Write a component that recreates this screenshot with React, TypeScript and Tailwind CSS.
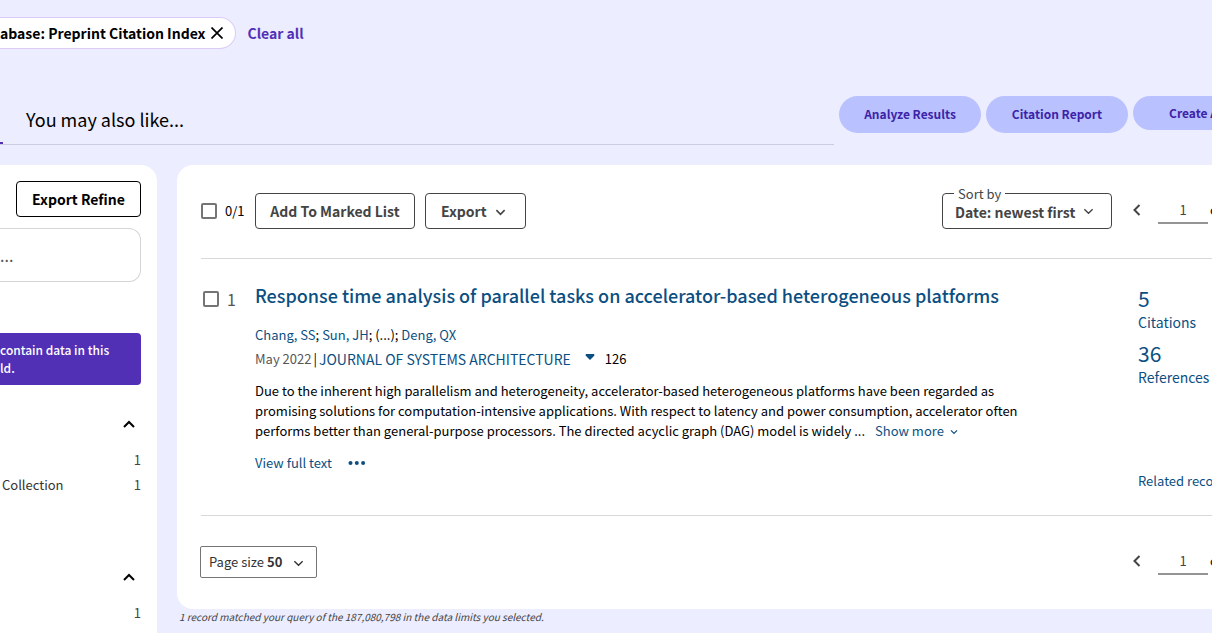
import React from "react";

type IconProps = { className?: string; d: string; width?: number };

function Stroke({ className, d, width = 2 }: IconProps) {
  return (
    <svg viewBox="0 0 12 12" className={className} fill="none" stroke="currentColor" strokeWidth={width} aria-hidden="true">
      <path d={d} />
    </svg>
  );
}

const DOWN = "M1.5 3.5 L6 8 L10.5 3.5";
const UP = "M1 9 L6 4 L11 9";
const LEFT = "M8.5 1 L3.5 6 L8.5 11";
const CLOSE = "M0.5 0.5 L11.5 11.5 M11.5 0.5 L0.5 11.5";

function Check({ label }: { label: string }) {
  return (
    <input
      type="checkbox"
      aria-label={label}
      className="size-4 shrink-0 appearance-none rounded-xs border-2 border-[#757575] bg-white checked:bg-[#5230b6]"
    />
  );
}

function Pager({ label }: { label: string }) {
  return (
    <div className="flex h-7 w-20 shrink-0 items-center text-[13px] text-[#444]">
      <button type="button" aria-label="Previous page" className="mr-4 w-[10px] shrink-0">
        <Stroke d={LEFT} className="-ml-px size-3" />
      </button>
      <input
        aria-label={label}
        defaultValue="1"
        className="h-7 w-[50px] shrink-0 border-b-2 border-[#949494] bg-transparent text-center outline-none"
      />
      <span className="ml-0.5 whitespace-nowrap text-black">of 1</span>
    </div>
  );
}

function Facet({ rows }: { rows: [string, string][] }) {
  return (
    <section>
      <div className="flex h-6 items-center justify-end pr-1.5">
        <button type="button" aria-label="Collapse section" className="text-black">
          <Stroke d={UP} className="size-3" />
        </button>
      </div>
      <ul className="pt-[11px] text-[13px] leading-[25px] text-[#444]">
        {rows.map(([name, count], i) => (
          <li key={i} className="flex justify-between pl-0.5">
            <span className="text-[#333]">{name}</span>
            <span>{count}</span>
          </li>
        ))}
      </ul>
    </section>
  );
}

const pill = "h-[37px] w-[142px] shrink-0 whitespace-nowrap rounded-full bg-[#bac1ff] pb-0.5 text-[12px] font-bold text-[#3d23a8]";
const link = "text-[#0b4f82] hover:underline";

export default function App() {
  return (
    <div className="flex min-h-screen flex-col overflow-hidden bg-[#ecedff] font-['Noto_Sans_CJK_SC',sans-serif] text-[13px] text-black">
      <header className="flex items-center gap-[11px] pt-[17px] text-[14px] font-bold">
        <div className="flex h-8 items-center gap-1.5 rounded-r-full border border-l-0 border-[#dccbf8] bg-white pr-3">
          <span className="whitespace-nowrap">abase: Preprint Citation Index</span>
          <button type="button" aria-label="Remove filter">
            <Stroke d={CLOSE} width={1.7} className="size-3" />
          </button>
        </div>
        <a href="#clear" className="text-[#5230b6]">Clear all</a>
      </header>

      <div className="mt-[47px] flex h-[49px] gap-[5px]">
        <nav className="flex flex-1 items-stretch border-b border-[#cbcbe2]">
          <span className="w-[3px] border-b-2 border-[#5230b6]" />
          <a href="#like" className="pl-[23px] text-[18px] leading-[46px]">You may also like...</a>
        </nav>
        <div className="flex w-[373px] shrink-0 gap-[5px] overflow-hidden">
          <button type="button" className={pill}>Analyze Results</button>
          <button type="button" className={pill}>Citation Report</button>
          <button type="button" className="h-[34px] w-[142px] shrink-0 whitespace-nowrap rounded-full bg-[#bac1ff] text-[12px] font-bold text-[#3d23a8]">Create Alert</button>
        </div>
      </div>

      <div className="flex flex-1 gap-5 pt-5">
        <aside className="w-[157px] shrink-0 rounded-tr-2xl bg-white pr-4 pt-4">
          <div className="flex justify-end">
            <button type="button" className="h-9 w-[125px] rounded border border-black text-[14px] font-bold">Export Refine</button>
          </div>
          <input
            aria-label="Search within results"
            placeholder="..."
            className="mt-[11px] h-[54px] w-full rounded-r-xl border border-l-0 border-[#d5d5d5] text-[16px] outline-none placeholder:text-[#555]"
          />
          <p className="mt-[51px] h-[52px] rounded-r bg-[#5230b6] pt-2 text-[12px] font-medium leading-[18px] text-white">
            contain data in this
            <br />
            ld.
          </p>
          <div className="mt-[27px] flex flex-col gap-[68px]">
            <Facet rows={[["", "1"], ["Collection", "1"]]} />
            <Facet rows={[["", "1"]]} />
          </div>
        </aside>

        <div className="min-w-0 flex-1">
          <main className="overflow-hidden rounded-l-2xl bg-white pl-6">
            <div className="flex h-[94px] items-start border-b border-[#d9d9d9] pt-7">
              <label className="flex h-9 w-[54px] shrink-0 items-center gap-2">
                <Check label="Select all records" />
                <span>0/1</span>
              </label>
              <button type="button" className="h-9 w-40 shrink-0 rounded border border-[#444] text-[14px] font-bold text-[#444]">Add To Marked List</button>
              <button type="button" className="ml-[10px] flex h-9 w-[101px] shrink-0 items-center gap-2 rounded border border-[#444] pl-[15px] text-[14px] font-bold text-[#444]">
                Export
                <Stroke d={DOWN} width={1.8} className="mt-0.5 size-[11px]" />
              </button>
              <div className="relative ml-auto h-9 w-[170px] shrink-0">
                <select
                  id="sort"
                  className="h-9 w-full appearance-none rounded border border-[#444] bg-white pl-3 pt-0.5 text-[14px] font-bold text-[#444] outline-none"
                >
                  <option>Date: newest first</option>
                </select>
                <label htmlFor="sort" className="absolute -top-2 left-3 bg-white px-1 text-[13px] leading-[18px] text-[#444]">Sort by</label>
                <Stroke d={DOWN} width={1.5} className="pointer-events-none absolute right-[18px] top-[13px] size-[11px] text-[#444]" />
              </div>
              <div className="ml-5 mt-[3px]"><Pager label="Page number" /></div>
            </div>

            <article className="flex h-[257px] border-b border-[#d9d9d9]">
              <label className="mt-8 flex h-4 w-[54px] shrink-0 items-center gap-2 pl-0.5">
                <Check label="Select record 1" />
                <span className="text-[16px] text-[#555]">1</span>
              </label>
              <div className="min-w-0 flex-1 pt-[22px]">
                <h2 className="text-[18px] font-medium leading-7">
                  <a href="#record" className={link}>Response time analysis of parallel tasks on accelerator-based heterogeneous platforms</a>
                </h2>
                <p className="mt-4 leading-5">
                  <a href="#a1" className={link}>Chang, SS</a>; <a href="#a2" className={link}>Sun, JH</a>; (...); <a href="#a3" className={link}>Deng, QX</a>
                </p>
                <div className="mt-0.5 flex items-center leading-6">
                  <span className="text-[#555]">May 2022</span>
                  <span className="mx-0.5">|</span>
                  <a href="#journal" className="text-[14px] text-[#0b4f82] hover:underline">JOURNAL OF SYSTEMS ARCHITECTURE</a>
                  <svg viewBox="0 0 10 6" className="mb-1 ml-3.5 h-1.5 w-[10px] text-[#0b4f82]" fill="currentColor" aria-hidden="true">
                    <path d="M1 0H9Q10 1 9 2L5 6L1 2Q0 1 1 0Z" />
                  </svg>
                  <span className="ml-[10px]">126</span>
                </div>
                <div className="mt-[10px] max-w-[775px] leading-5">
                  <p className="inline">
                    Due to the inherent high parallelism and heterogeneity, accelerator-based heterogeneous platforms have been regarded as promising solutions for computation-intensive applications. With respect to latency and power consumption, accelerator often performs better than general-purpose processors. The directed acyclic graph (DAG) model is widely ...
                  </p>
                  <button type="button" className="ml-[10px] inline whitespace-nowrap text-[#0b4f82]">
                    Show more
                    <Stroke d={DOWN} width={1.8} className="ml-1.5 inline size-2" />
                  </button>
                </div>
                <div className="mt-3 flex items-center gap-4 leading-5">
                  <a href="#full" className={link}>View full text</a>
                  <button type="button" aria-label="More actions" className="text-[#0b4f82]">
                    <svg viewBox="0 0 18 4" className="h-1 w-[18px]" fill="currentColor" aria-hidden="true">
                      <circle cx="2.5" cy="2" r="2" />
                      <circle cx="8.8" cy="2" r="2" />
                      <circle cx="15.1" cy="2" r="2" />
                    </svg>
                  </button>
                </div>
              </div>
              <div className="flex w-[74px] shrink-0 flex-col whitespace-nowrap pt-[27px]">
                <a href="#citations" className="text-[21px] leading-6 text-[#0b4f82]">5</a>
                <a href="#citations" className="text-[14px] leading-6 text-[#0b4f82]">Citations</a>
                <a href="#references" className="mt-[7px] text-[21px] leading-6 text-[#0b4f82]">36</a>
                <a href="#references" className="text-[14px] leading-6 text-[#0b4f82]">References</a>
                <a href="#related" className="mt-20 leading-6 text-[#0b4f82]">Related records</a>
              </div>
            </article>

            <div className="-ml-px flex items-start justify-between pb-[31px] pt-[30px]">
              <div className="relative flex h-8 w-[117px] items-center rounded-xs border border-[#757575] text-[#333]">
                <label htmlFor="size" className="whitespace-nowrap pl-2">Page size</label>
                <select id="size" className="h-full flex-1 appearance-none bg-transparent pl-[3px] font-bold outline-none">
                  <option>50</option>
                </select>
                <Stroke d={DOWN} width={1.5} className="pointer-events-none absolute right-3 top-[11px] size-[11px]" />
              </div>
              <div className="mt-px"><Pager label="Page number, bottom" /></div>
            </div>
          </main>
          <p className="pl-0.5 text-[10px] italic leading-4 text-[#444]">1 record matched your query of the 187,080,798 in the data limits you selected.</p>
        </div>
      </div>
    </div>
  );
}
